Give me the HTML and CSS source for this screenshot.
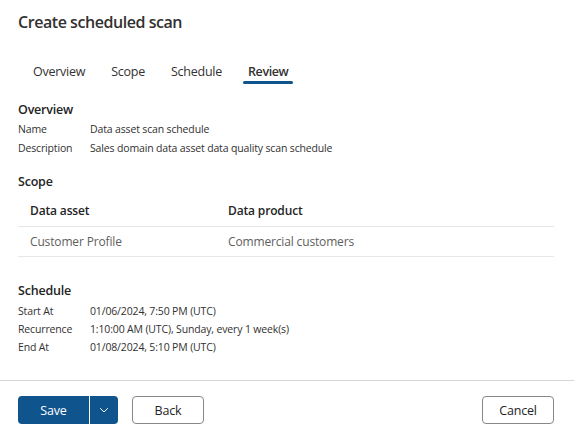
FILE: index.html
```html
<!DOCTYPE html>
<html>
<head>
<meta charset="utf-8">
<link rel="stylesheet" href="styles.css">
</head>
<body>
<div class="dialog">
  <div class="content">
    <h1 class="title">Create scheduled scan</h1>
    <div class="tabs">
      <div class="tab">Overview</div>
      <div class="tab">Scope</div>
      <div class="tab">Schedule</div>
      <div class="tab active">Review</div>
    </div>

    <section class="section overview">
      <h2 class="section-title">Overview</h2>
      <div class="kv">
        <div class="k">Name</div><div class="v">Data asset scan schedule</div>
        <div class="k">Description</div><div class="v">Sales domain data asset data quality scan schedule</div>
      </div>
    </section>

    <section class="section scope">
      <h2 class="section-title">Scope</h2>
      <div class="table">
        <div class="row head">
          <div class="cell c1">Data asset</div>
          <div class="cell">Data product</div>
        </div>
        <div class="row">
          <div class="cell c1">Customer Profile</div>
          <div class="cell">Commercial customers</div>
        </div>
      </div>
    </section>

    <section class="section schedule">
      <h2 class="section-title">Schedule</h2>
      <div class="kv tight">
        <div class="k">Start At</div><div class="v">01/06/2024, 7:50 PM (UTC)</div>
        <div class="k">Recurrence</div><div class="v">1:10:00 AM (UTC), Sunday, every 1 week(s)</div>
        <div class="k">End At</div><div class="v">01/08/2024, 5:10 PM (UTC)</div>
      </div>
    </section>
  </div>

  <div class="footer">
    <div class="split">
      <button class="btn primary main">Save</button>
      <button class="btn primary chev" aria-label="More">
        <svg width="12" height="12" viewBox="0 0 12 12"><path d="M2.5 4.5 L6 8 L9.5 4.5" fill="none" stroke="#fff" stroke-width="1" stroke-linecap="round" stroke-linejoin="round"/></svg>
      </button>
    </div>
    <button class="btn secondary">Back</button>
    <div class="spacer"></div>
    <button class="btn secondary">Cancel</button>
  </div>
</div>
</body>
</html>
```

FILE: styles.css
```css
* { box-sizing: border-box; }
html, body { margin: 0; padding: 0; background: #fff; }
body {
  font-family: "Segoe UI", "Open Sans", "Liberation Sans", sans-serif;
  color: #323130;
  width: 574px;
  height: 441px;
}
.dialog { display: flex; flex-direction: column; height: 441px; }
.content { padding: 10px 18px 0 18px; flex: 1; }
.title {
  margin: 0;
  font-size: 16px;
  font-weight: 600;
  line-height: 24px;
  letter-spacing: -0.45px;
  color: #323130;
}
.tabs {
  display: flex;
  margin-top: 28px;
  padding-left: 2px;
}
.tab {
  position: relative;
  padding: 0 13px;
  font-size: 12.5px;
  letter-spacing: -0.25px;
  line-height: 20px;
  height: 22px;
  color: #323130;
}
.tab.active { font-weight: 600; letter-spacing: -0.4px; }
.tab.active::after {
  content: "";
  position: absolute;
  left: 8px;
  right: 8px;
  bottom: 0;
  height: 3px;
  border-radius: 2px;
  background: #0f548c;
}
.section-title {
  margin: 0;
  font-size: 12.5px;
  font-weight: 600;
  letter-spacing: -0.2px;
  line-height: 18px;
  color: #242424;
}
.overview { margin-top: 17px; }
.kv {
  display: grid;
  grid-template-columns: 72px 1fr;
  font-size: 10.5px;
  letter-spacing: -0.15px;
  line-height: 19px;
  color: #323130;
  margin-top: 1px;
}
.kv.tight { line-height: 18px; margin-top: 2px; }
.scope { margin-top: 15px; }
.table { margin-top: 3px; width: 536px; }
.row {
  display: flex;
  height: 30px;
  align-items: center;
  border-bottom: 1px solid #e6e6e6;
  font-size: 12px;
  letter-spacing: -0.15px;
  color: #605e5c;
}
.row.head { color: #242424; font-weight: 600; height: 33px; }
.cell { padding-left: 12px; }
.c1 { width: 198px; }
.schedule { margin-top: 25px; }
.footer {
  border-top: 1px solid #d6d6d6;
  height: 61px;
  display: flex;
  align-items: flex-start;
  padding: 15px 20px 0 18px;
  gap: 14px;
}
.spacer { flex: 1; }
.split { display: flex; gap: 1px; }
.btn {
  font-family: inherit;
  font-size: 12.5px;
  letter-spacing: -0.2px;
  height: 28px;
  border-radius: 4px;
  cursor: pointer;
  padding: 0;
}
.primary {
  background: #0f548c;
  color: #fff;
  border: none;
}
.main { width: 71px; border-radius: 4px 0 0 4px; }
.chev {
  width: 28px;
  border-radius: 0 4px 4px 0;
  display: flex;
  align-items: center;
  justify-content: center;
}
.secondary {
  width: 72px;
  background: #fff;
  border: 1px solid #8a8886;
  color: #242424;
}
```
